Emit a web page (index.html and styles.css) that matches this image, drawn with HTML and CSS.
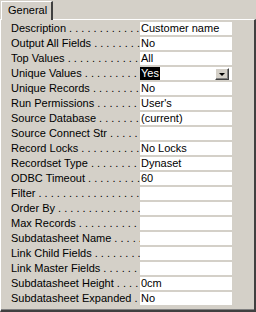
FILE: index.html
```
<!DOCTYPE html>
<html>
<head>
<meta charset="utf-8">
<link rel="stylesheet" href="styles.css">
</head>
<body>
<div class="tabs"><div class="tab">General</div></div>
<div class="panel">
  <div class="row"><div class="label">Description</div><div class="value">Customer name</div></div>
  <div class="row"><div class="label">Output All Fields</div><div class="value">No</div></div>
  <div class="row"><div class="label">Top Values</div><div class="value">All</div></div>
  <div class="row"><div class="label">Unique Values</div><div class="value combo"><span class="sel">Yes</span><span class="btn"><span class="arrow"></span></span></div></div>
  <div class="row"><div class="label">Unique Records</div><div class="value">No</div></div>
  <div class="row"><div class="label">Run Permissions</div><div class="value">User's</div></div>
  <div class="row"><div class="label">Source Database</div><div class="value">(current)</div></div>
  <div class="row"><div class="label">Source Connect Str</div><div class="value"></div></div>
  <div class="row"><div class="label">Record Locks</div><div class="value">No Locks</div></div>
  <div class="row"><div class="label">Recordset Type</div><div class="value">Dynaset</div></div>
  <div class="row"><div class="label">ODBC Timeout</div><div class="value">60</div></div>
  <div class="row"><div class="label">Filter</div><div class="value"></div></div>
  <div class="row"><div class="label">Order By</div><div class="value"></div></div>
  <div class="row"><div class="label">Max Records</div><div class="value"></div></div>
  <div class="row"><div class="label">Subdatasheet Name</div><div class="value"></div></div>
  <div class="row"><div class="label">Link Child Fields</div><div class="value"></div></div>
  <div class="row"><div class="label">Link Master Fields</div><div class="value"></div></div>
  <div class="row"><div class="label">Subdatasheet Height</div><div class="value">0cm</div></div>
  <div class="row"><div class="label">Subdatasheet Expanded</div><div class="value">No</div></div>
</div>
</body>
</html>
```
FILE: styles.css
```
html, body {
  margin: 0;
  padding: 0;
  background: #d4d0c8;
  width: 256px;
  height: 312px;
  overflow: hidden;
  font-family: "Liberation Sans", Arial, sans-serif;
  font-size: 11px;
  color: #000;
}
.tabs {
  display: flex;
  height: 19px;
  padding-left: 1px;
  padding-top: 1px;
  box-sizing: border-box;
}
.tab {
  width: 52px;
  box-sizing: border-box;
  border-top: 1px solid #fff;
  border-left: 1px solid #fff;
  border-right: 2px solid #404040;
  padding-left: 6px;
  line-height: 17px;
  position: relative;
  z-index: 1;
  margin-bottom: -1px;
  background: #d4d0c8;
}
.panel {
  height: 293px;
  box-sizing: border-box;
  border-top: 1px solid #fff;
  border-left: 1px solid #fff;
  border-right: 2px solid #404040;
  border-bottom: 2px solid #404040;
  box-shadow: inset 0 -1px 0 #808080;
  padding: 2px 0 0 10px;
  display: flex;
  flex-direction: column;
  gap: 2px;
}
.row {
  display: flex;
  height: 13px;
}
.label {
  width: 129px;
  white-space: nowrap;
  overflow: hidden;
  line-height: 13px;
}
.label::after {
  content: " . . . . . . . . . . . . . . . . . . . . . . . . .";
}
.value {
  width: 92px;
  background: #fff;
  line-height: 13px;
  padding-left: 1px;
  box-sizing: border-box;
  white-space: nowrap;
  overflow: hidden;
}
.combo {
  display: flex;
  justify-content: space-between;
  align-items: center;
  padding-left: 0;
}
.sel {
  background: #000;
  color: #fff;
  padding: 0 1px;
  line-height: 13px;
}
.btn {
  width: 14px;
  height: 12px;
  margin-right: 3px;
  box-sizing: border-box;
  background: #d4d0c8;
  border: 1px solid;
  border-color: #fff #404040 #404040 #fff;
  box-shadow: inset -1px -1px 0 #808080;
  display: flex;
  align-items: center;
  justify-content: center;
}
.arrow {
  width: 0;
  height: 0;
  border-left: 3px solid transparent;
  border-right: 3px solid transparent;
  border-top: 3px solid #000;
  margin-top: 1px;
}
```
